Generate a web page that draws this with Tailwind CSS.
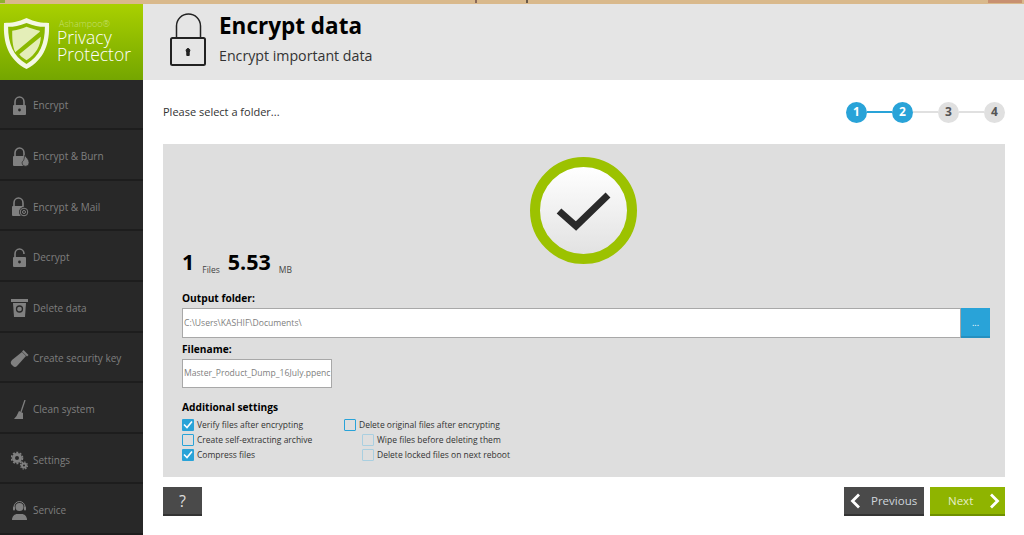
<!DOCTYPE html>
<html>
<head>
<meta charset="UTF-8">
<title>Ashampoo Privacy Protector</title>
<script src="https://cdn.jsdelivr.net/npm/@tailwindcss/browser@4"></script>
</head>
<body class="w-[1024px] h-[535px] overflow-hidden bg-white font-['Open_Sans','Noto_Sans',sans-serif]">
<div class="h-[4px] bg-[#d9b98c] flex items-start">
  <span class="w-[5px] h-[3px] bg-[#8fb030]"></span>
  <span class="w-[2px] h-[3px] bg-[#8a6a5a] ml-[470px]"></span>
  <span class="w-[2px] h-[3px] bg-[#6a5a4a] ml-[49px]"></span>
  <span class="w-[34px] h-[3px] bg-[#c89070] ml-auto mr-[2px]"></span>
</div>
<div class="flex h-[531px]">

  <!-- sidebar -->
  <aside class="w-[143px] shrink-0 bg-[#282828] flex flex-col">
    <div class="h-[76px] bg-gradient-to-b from-[#a9d000] to-[#74a600] flex items-center pl-[3px] gap-[7px]">
      <svg width="47" height="53" viewBox="0 0 46 54" preserveAspectRatio="none" class="shrink-0 mt-[4px]">
        <path d="M23 1 C31 5 38 6 45 6 C46 26 41 43 23 53 C5 43 0 26 1 6 C8 6 15 5 23 1Z" fill="#f4f8e4"/>
        <path d="M23 6 C30 9 35 10 41 10 C41 27 36 40 23 48 C10 40 5 27 5 10 C11 10 16 9 23 6Z" fill="#8ab800"/>
        <path d="M23 10 C28 12 32 13 36 14 L36 15 L12 36 C9 29 9 21 9 14 C15 13 19 12 23 10Z" fill="#e4eeb8"/>
        <path d="M37 20 C37 29 32 38 23 44 C20 42 18 41 16 38Z" fill="#e4eeb8"/>
      </svg>
      <div class="text-white font-light -mt-[2px]">
        <div class="text-[9px] text-[#c5df70] leading-[10px] pl-[2px]">Ashampoo®</div>
        <div class="text-[17.5px] leading-[17px]">Privacy</div>
        <div class="text-[17.5px] leading-[17px]">Protector</div>
      </div>
    </div>
    <nav class="flex-1 flex flex-col text-[10px] text-[#7f7f7f]">
      <a class="h-[50.6px] pt-[4px] flex items-center gap-[4px] pl-[10px] border-b-2 border-[#1d1d1d]">
        <span class="w-[19px] flex justify-center"><svg width="15" height="20" viewBox="0 0 15 20" fill="#808080"><path d="M3 9V6a4.500 5 0 0 1 9 0v3" fill="none" stroke="#808080" stroke-width="1.600"/><rect x="1" y="9" width="13" height="10" rx="1"/><circle cx="7.500" cy="14" r="1.400" fill="#282828"/></svg></span>
        <span>Encrypt</span>
      </a>
      <a class="h-[50.6px] pt-[4px] flex items-center gap-[4px] pl-[10px] border-b-2 border-[#1d1d1d]">
        <span class="w-[19px] flex justify-center"><svg width="18" height="20" viewBox="0 0 18 20" fill="#808080"><path d="M4 9V6a4.500 5 0 0 1 9 0v3" fill="none" stroke="#808080" stroke-width="1.600"/><rect x="2" y="9" width="12" height="10" rx="1"/><path d="M14 8c1 3 4 4 4 7.500a3.500 3.500 0 0 1-7 .5c0-2 2-2 2-4z" stroke="#282828" stroke-width=".7"/></svg></span>
        <span>Encrypt &amp; Burn</span>
      </a>
      <a class="h-[50.6px] pt-[4px] flex items-center gap-[4px] pl-[10px] border-b-2 border-[#1d1d1d]">
        <span class="w-[19px] flex justify-center"><svg width="18" height="20" viewBox="0 0 18 20" fill="#808080"><path d="M3 9V6a4.500 5 0 0 1 9 0v3" fill="none" stroke="#808080" stroke-width="1.600"/><rect x="1" y="9" width="12" height="10" rx="1"/><circle cx="13" cy="15" r="5" fill="#282828"/><circle cx="13" cy="15" r="3.800" fill="none" stroke="#808080"/><circle cx="13" cy="15" r="1.500" fill="none" stroke="#808080"/></svg></span>
        <span>Encrypt &amp; Mail</span>
      </a>
      <a class="h-[50.6px] pt-[4px] flex items-center gap-[4px] pl-[10px] border-b-2 border-[#1d1d1d]">
        <span class="w-[19px] flex justify-center"><svg width="15" height="20" viewBox="0 0 15 20" fill="#808080"><path d="M3 9V6a4.500 5 0 0 1 9 0" fill="none" stroke="#808080" stroke-width="1.600"/><rect x="1" y="9" width="13" height="10" rx="1"/><circle cx="7.500" cy="14" r="1.400" fill="#282828"/></svg></span>
        <span>Decrypt</span>
      </a>
      <a class="h-[50.6px] pt-[4px] flex items-center gap-[4px] pl-[10px] border-b-2 border-[#1d1d1d]">
        <span class="w-[19px] flex justify-center"><svg width="17" height="20" viewBox="0 0 17 20" fill="#808080"><rect x="0" y="1" width="17" height="3"/><path d="M2 5h13l-1 14H3z"/><circle cx="8.500" cy="11" r="3" fill="none" stroke="#282828" stroke-width="1.300"/></svg></span>
        <span>Delete data</span>
      </a>
      <a class="h-[50.6px] pt-[4px] flex items-center gap-[4px] pl-[10px] border-b-2 border-[#1d1d1d]">
        <span class="w-[19px] flex justify-center"><svg width="19" height="19" viewBox="0 0 19 19" fill="#808080"><path d="M12 3l4 4-9 10q-2 2-4 0l-2-2q-1-2 1-4z"/><path d="M13.500 1l5 5-1.500 1.500-5-5z"/></svg></span>
        <span>Create security key</span>
      </a>
      <a class="h-[50.6px] pt-[4px] flex items-center gap-[4px] pl-[10px] border-b-2 border-[#1d1d1d]">
        <span class="w-[19px] flex justify-center"><svg width="14" height="20" viewBox="0 0 14 20" fill="#808080"><path d="M12 0L8 12" stroke="#808080" stroke-width="1.300"/><path d="M6 11l4 2 0 6-9 0 q3-3 5-8z"/></svg></span>
        <span>Clean system</span>
      </a>
      <a class="h-[50.6px] pt-[4px] flex items-center gap-[4px] pl-[10px] border-b-2 border-[#1d1d1d]">
        <span class="w-[19px] flex justify-center"><svg width="17" height="19" viewBox="0 0 17 19" fill="none" stroke="#808080"><circle cx="6" cy="7" r="3.500" stroke-width="3"/><circle cx="6" cy="7" r="5.500" stroke-width="1.600" stroke-dasharray="2 1.500"/><circle cx="13" cy="14.500" r="2" stroke-width="2"/><circle cx="13" cy="14.500" r="3.500" stroke-width="1.200" stroke-dasharray="1.500 1.200"/></svg></span>
        <span>Settings</span>
      </a>
      <a class="h-[50.6px] pt-[4px] flex items-center gap-[4px] pl-[10px] border-b-2 border-[#1d1d1d]">
        <span class="w-[19px] flex justify-center"><svg width="15" height="19" viewBox="0 0 15 19" fill="#808080"><circle cx="7.500" cy="6" r="4"/><path d="M2 7V6a5.500 5.500 0 0 1 11 0v1" fill="none" stroke="#808080"/><rect x="1" y="5.500" width="2" height="4" rx="1"/><rect x="12" y="5.500" width="2" height="4" rx="1"/><path d="M0 19c0-4 3-6 5-6h5c2 0 5 2 5 6z"/></svg></span>
        <span>Service</span>
      </a>
    </nav>
  </aside>

  <div class="flex-1 min-w-0 flex flex-col">
    <!-- header -->
    <header class="h-[76px] bg-[#e5e5e5] flex items-center pl-[27px] gap-[13px]">
      <svg width="37" height="54" viewBox="0 0 37 54" class="-mt-[4px] shrink-0" fill="none" stroke="#222">
        <path d="M6.500 25V13a12 12 0 0 1 24 0v12" stroke-width="1.500"/>
        <rect x="1" y="25" width="34" height="27" rx="1.500" stroke-width="2"/>
        <path d="M18 35.500a2 2 0 0 1 1.200 3.500v3.500h-2.400V39a2 2 0 0 1 1.200-3.500z" fill="#222" stroke-width="1"/>
      </svg>
      <div class="-mt-[7px] -ml-[1px]">
        <h1 class="text-[22.5px] leading-[30px] font-bold text-black">Encrypt data</h1>
        <p class="text-[14.2px] leading-[22px] mt-[4px] text-[#333]">Encrypt important data</p>
      </div>
    </header>

    <div class="flex-1 pl-[20px] pr-[19px] flex flex-col">
      <div class="h-[64px] flex items-center justify-between">
        <span class="text-[11px] text-[#333]">Please select a folder...</span>
        <div class="flex items-center text-[12px] font-bold">
          <span class="w-[21px] h-[21px] rounded-full bg-[#29a3d8] text-white flex items-center justify-center">1</span>
          <span class="w-[25px] h-[2px] bg-[#29a3d8]"></span>
          <span class="w-[21px] h-[21px] rounded-full bg-[#29a3d8] text-white flex items-center justify-center">2</span>
          <span class="w-[25px] h-[2px] bg-[#e0e0e0]"></span>
          <span class="w-[21px] h-[21px] rounded-full bg-[#e0e0e0] text-[#555] flex items-center justify-center">3</span>
          <span class="w-[25px] h-[2px] bg-[#e0e0e0]"></span>
          <span class="w-[21px] h-[21px] rounded-full bg-[#e0e0e0] text-[#555] flex items-center justify-center">4</span>
        </div>
      </div>

      <!-- panel -->
      <section class="h-[333px] bg-[#dedede] pt-[13px] pl-[19px] pr-[15px]">
        <div class="w-[107px] h-[107px] ml-[348px] rounded-full border-[10px] border-[#9cc200] bg-gradient-to-b from-white to-[#e2e2e2] flex items-center justify-center">
          <svg width="56" height="42" viewBox="0 0 56 42" class="mt-[1px]"><path d="M3 21l17 15L52 5" fill="none" stroke="#2a2a2a" stroke-width="7"/></svg>
        </div>
        <div class="-mt-[17px] h-[30px] flex items-end text-black">
          <span class="text-[21.5px] leading-[30px] font-bold">1</span>
          <span class="text-[8.5px] text-[#444] ml-[8px] mb-[1px] leading-[12px]">Files</span>
          <span class="text-[21.5px] leading-[30px] font-bold ml-[8px]">5.53</span>
          <span class="text-[8.5px] text-[#444] ml-[8px] mb-[1px] leading-[12px]">MB</span>
        </div>
        <label class="block mt-[14px] text-[10.2px] leading-[14px] font-bold text-black">Output folder:</label>
        <div class="flex h-[30px] mt-[3px]">
          <div class="flex-1 bg-white border border-[#a8a8a8] flex items-center pl-[1px] text-[8.6px] text-[#808080]">C:\Users\KASHIF\Documents\</div>
          <button class="w-[29px] bg-[#29a3d8] border-b-2 border-[#2590c0] text-white text-[9px] leading-none">...</button>
        </div>
        <label class="block mt-[4px] text-[10.2px] leading-[14px] font-bold text-black">Filename:</label>
        <div class="w-[150px] h-[29px] mt-[3px] bg-white border border-[#a8a8a8] flex items-center pl-[1px] text-[8.6px] text-[#808080] whitespace-nowrap overflow-hidden">Master_Product_Dump_16July.ppenc</div>
        <h3 class="mt-[12px] text-[10.2px] leading-[14px] font-bold text-black">Additional settings</h3>
        <div class="flex mt-[3px] text-[8.5px] leading-[15px] text-[#333]">
          <div class="w-[162px]">
            <div class="h-[15px] flex items-center gap-[3px]">
              <span class="w-[12px] h-[12px] rounded-[1px] bg-[#29a3d8] flex items-center justify-center"><svg width="10" height="9" viewBox="0 0 10 9"><path d="M1 4.500l3 3 5-6" fill="none" stroke="#fff" stroke-width="1.600"/></svg></span>
              <span>Verify files after encrypting</span>
            </div>
            <div class="h-[15px] flex items-center gap-[3px]">
              <span class="w-[12px] h-[12px] rounded-[1px] border border-[#29a3d8]"></span>
              <span>Create self-extracting archive</span>
            </div>
            <div class="h-[15px] flex items-center gap-[3px]">
              <span class="w-[12px] h-[12px] rounded-[1px] bg-[#29a3d8] flex items-center justify-center"><svg width="10" height="9" viewBox="0 0 10 9"><path d="M1 4.500l3 3 5-6" fill="none" stroke="#fff" stroke-width="1.600"/></svg></span>
              <span>Compress files</span>
            </div>
          </div>
          <div>
            <div class="h-[15px] flex items-center gap-[3px]">
              <span class="w-[12px] h-[12px] rounded-[1px] border border-[#29a3d8]"></span>
              <span>Delete original files after encrypting</span>
            </div>
            <div class="h-[15px] flex items-center gap-[3px] pl-[18px]">
              <span class="w-[12px] h-[12px] rounded-[1px] border border-[#a9cfe0]"></span>
              <span>Wipe files before deleting them</span>
            </div>
            <div class="h-[15px] flex items-center gap-[3px] pl-[18px]">
              <span class="w-[12px] h-[12px] rounded-[1px] border border-[#a9cfe0]"></span>
              <span>Delete locked files on next reboot</span>
            </div>
          </div>
        </div>
      </section>

      <!-- buttons -->
      <div class="flex items-start mt-[10px]">
        <button class="w-[39px] h-[29px] bg-[#4a4a4a] border-b-2 border-[#333] text-[#ddd] text-[16px] leading-none">?</button>
        <button class="ml-auto w-[80px] h-[29px] bg-[#4a4a4a] border-b-2 border-[#333] text-[#cfd6dc] text-[11.5px] flex items-center pl-[6px] gap-[10px]">
          <svg width="11" height="16" viewBox="0 0 11 16"><path d="M9 1.500L2.500 8 9 14.500" fill="none" stroke="#fff" stroke-width="2.800"/></svg>
          <span>Previous</span>
        </button>
        <button class="ml-[6px] w-[75px] h-[29px] bg-[#8fb400] border-b-2 border-[#6f9000] text-[#e6efc8] text-[11.5px] flex items-center pl-[18px] gap-[16px]">
          <span>Next</span>
          <svg width="11" height="16" viewBox="0 0 11 16"><path d="M2 1.500L8.500 8 2 14.500" fill="none" stroke="#fff" stroke-width="2.800"/></svg>
        </button>
      </div>
    </div>
  </div>
</div>
</body>
</html>
